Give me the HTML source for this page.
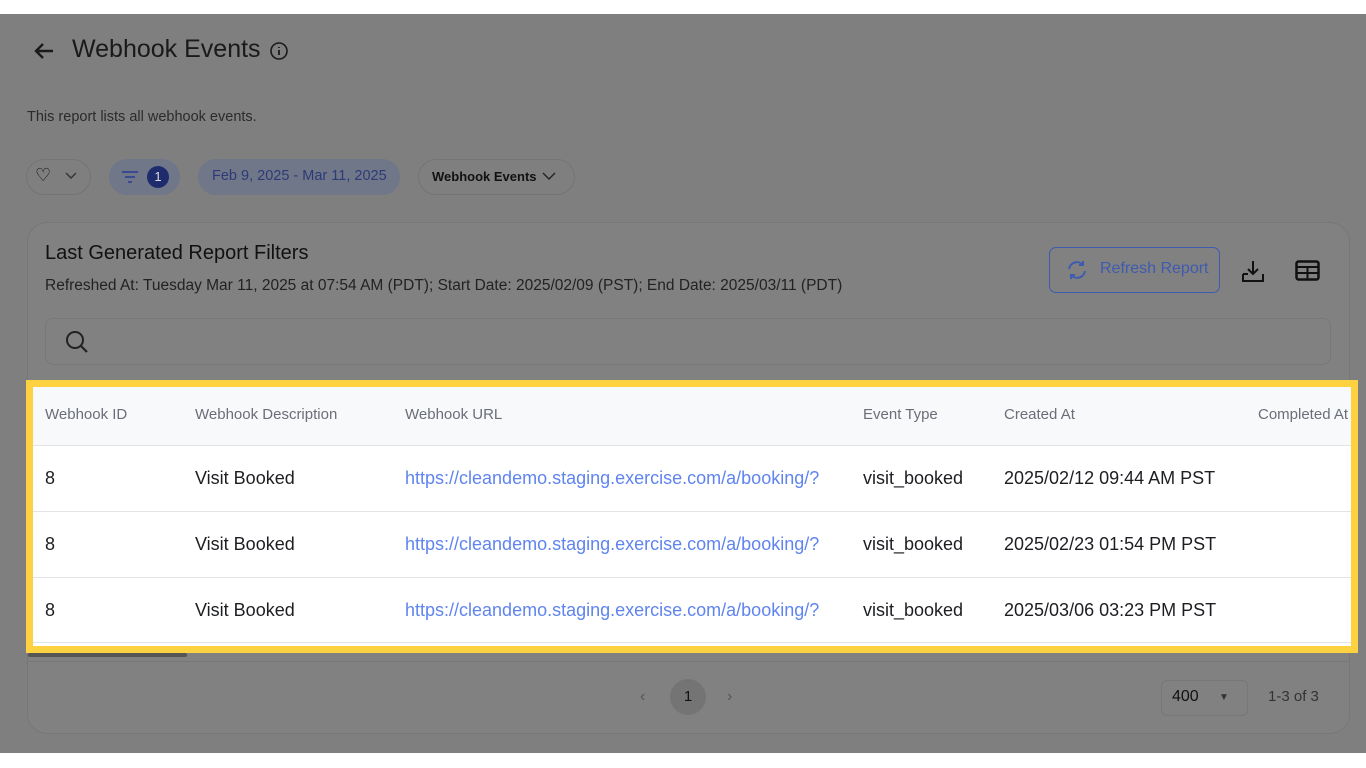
<!DOCTYPE html>
<html><head><meta charset="utf-8"><style>
*{box-sizing:border-box;margin:0;padding:0}
body{width:1366px;height:768px;background:#fff;font-family:"Liberation Sans",sans-serif;position:relative;overflow:hidden}
.ov{position:absolute;left:0;top:14px;width:1366px;height:739px;background:#7f7f7f}
.a{position:absolute;white-space:nowrap}
.pill{position:absolute;border:1px solid #747474;border-radius:18px;height:36px}
.card{position:absolute;left:27px;top:222px;width:1323px;height:512px;border:1px solid #777;border-radius:20px;background:#818181}
.tbl{position:absolute;left:26px;top:380px;width:1332px;height:273px;border:7px solid #fdd13f;background:#fff;overflow:hidden}
.hdr{position:absolute;left:0;top:0;width:100%;height:59px;background:#f8f9fb;border-bottom:1px solid #e3e4e8}
.row{position:absolute;left:0;width:100%;height:66px;border-bottom:1px solid #e3e4e8}
.h{position:absolute;top:19px;font-size:15px;color:#6b6e78;white-space:nowrap}
.c{position:absolute;top:22px;font-size:18px;color:#1d1e22;white-space:nowrap}
.l{color:#5f84f0}
</style></head><body>
<div class="ov">
 <svg class="a" style="left:33px;top:27px" width="22" height="20" viewBox="0 0 22 20"><path d="M20 10H3M10 3L3 10l7 7" stroke="#1a1a1a" stroke-width="2.4" fill="none"/></svg>
 <div class="a" style="left:72px;top:21px;font-size:25px;color:#1a1a1a">Webhook Events</div>
 <svg class="a" style="left:269px;top:27px" width="20" height="20"><circle cx="10" cy="10" r="8" stroke="#1a1a1a" stroke-width="1.6" fill="none"/><path d="M10 9v5M10 6v1" stroke="#1a1a1a" stroke-width="1.8"/></svg>
 <div class="a" style="left:27px;top:95px;font-size:14.5px;color:#2b2b2b">This report lists all webhook events.</div>
 <div class="pill" style="left:26px;top:145px;width:65px"></div>
 <div class="a" style="left:35px;top:151px;font-size:18px;color:#111">♡</div>
 <svg class="a" style="left:65px;top:158px" width="12" height="8"><path d="M1 1l5 5 5-5" stroke="#333" fill="none" stroke-width="1.4"/></svg>
 <div class="pill" style="left:109px;top:145px;width:71px;background:#6f7789;border-color:#6f7789"></div>
 <svg class="a" style="left:120px;top:155px" width="20" height="16"><path d="M2 3h16M5 8h10M8 13h4" stroke="#3a4a90" stroke-width="2"/></svg>
 <div class="a" style="left:147px;top:152px;width:22px;height:22px;border-radius:11px;background:#1e2c6e;color:#ddd;font-size:13px;text-align:center;line-height:22px">1</div>
 <div class="pill" style="left:198px;top:145px;width:202px;background:#6f7789;border-color:#6f7789"></div>
 <div class="a" style="left:212px;top:154px;font-size:14.5px;color:#2e3a78">Feb 9, 2025 - Mar 11, 2025</div>
 <div class="pill" style="left:418px;top:145px;width:157px"></div>
 <div class="a" style="left:432px;top:155px;font-size:13px;color:#111;font-weight:bold">Webhook Events</div>
 <svg class="a" style="left:542px;top:158px" width="14" height="9"><path d="M1 1l6 6 6-6" stroke="#222" fill="none" stroke-width="1.4"/></svg>
</div>
<div class="card" style="top:222px">
 <div class="a" style="left:17px;top:19px;font-size:20px;color:#111">Last Generated Report Filters</div>
 <div class="a" style="left:17px;top:54px;font-size:15.5px;color:#222">Refreshed At: Tuesday Mar 11, 2025 at 07:54 AM (PDT); Start Date: 2025/02/09 (PST); End Date: 2025/03/11 (PDT)</div>
 <div class="a" style="left:1021px;top:24px;width:171px;height:46px;border:1.5px solid #3e5bb0;border-radius:7px"></div>
 <svg class="a" style="left:1037px;top:35px" width="24" height="24" viewBox="0 0 24 24"><path d="M4 11a8 8 0 0 1 14-4M20 13a8 8 0 0 1-14 4M18 3v4h-4M6 21v-4h4" stroke="#3e5bb0" stroke-width="2" fill="none"/></svg>
 <div class="a" style="left:1072px;top:37px;font-size:16px;color:#3e5bb0">Refresh Report</div>
 <svg class="a" style="left:1212px;top:36px" width="26" height="26" viewBox="0 0 26 26"><path d="M13 2v13M8 10l5 5 5-5M3 15v7h20v-7M3 15h5" stroke="#111" stroke-width="2" fill="none"/></svg>
 <svg class="a" style="left:1267px;top:37px" width="25" height="22"><rect x="1.5" y="1.5" width="22" height="18" rx="2" stroke="#111" stroke-width="2.5" fill="none"/><path d="M1.5 7h22M12.5 7v12M1.5 13h22" stroke="#111" stroke-width="2"/></svg>
 <div class="a" style="left:17px;top:95px;width:1286px;height:47px;border:1px solid #777;border-radius:8px"></div>
 <svg class="a" style="left:36px;top:106px" width="26" height="26"><circle cx="11" cy="11" r="8" stroke="#222" stroke-width="2" fill="none"/><path d="M17 17l6 6" stroke="#222" stroke-width="2.2"/></svg>
 <div class="a" style="left:0;top:430px;width:159px;height:4px;background:#555;border-radius:2px"></div>
 <div class="a" style="left:0;top:438px;width:1321px;height:1px;background:#777"></div>
 <div class="a" style="left:612px;top:465px;font-size:16px;color:#555">‹</div>
 <div class="a" style="left:642px;top:456px;width:36px;height:36px;border-radius:18px;background:#747474;text-align:center;line-height:36px;font-size:15px;color:#111">1</div>
 <div class="a" style="left:699px;top:465px;font-size:16px;color:#555">›</div>
 <div class="a" style="left:1133px;top:457px;width:87px;height:36px;border:1px solid #777;border-radius:6px"></div>
 <div class="a" style="left:1144px;top:465px;font-size:16px;color:#111">400</div>
 <div class="a" style="left:1191px;top:469px;font-size:10px;color:#333">▼</div>
 <div class="a" style="left:1240px;top:465px;font-size:15px;color:#333">1-3 of 3</div>
</div>
<div class="tbl">
 <div class="hdr">
  <div class="h" style="left:12px">Webhook ID</div><div class="h" style="left:162px">Webhook Description</div><div class="h" style="left:372px">Webhook URL</div><div class="h" style="left:830px">Event Type</div><div class="h" style="left:971px">Created At</div><div class="h" style="left:1225px">Completed At</div>
 </div>
 <div class="row" style="top:59px"><div class="c" style="left:12px">8</div><div class="c" style="left:162px">Visit Booked</div><div class="c l" style="left:372px">https://cleandemo.staging.exercise.com/a/booking/?</div><div class="c" style="left:830px">visit_booked</div><div class="c" style="left:971px">2025/02/12 09:44 AM PST</div></div>
 <div class="row" style="top:125px"><div class="c" style="left:12px">8</div><div class="c" style="left:162px">Visit Booked</div><div class="c l" style="left:372px">https://cleandemo.staging.exercise.com/a/booking/?</div><div class="c" style="left:830px">visit_booked</div><div class="c" style="left:971px">2025/02/23 01:54 PM PST</div></div>
 <div class="row" style="top:191px;height:65px"><div class="c" style="left:12px">8</div><div class="c" style="left:162px">Visit Booked</div><div class="c l" style="left:372px">https://cleandemo.staging.exercise.com/a/booking/?</div><div class="c" style="left:830px">visit_booked</div><div class="c" style="left:971px">2025/03/06 03:23 PM PST</div></div>
</div>
</body></html>
